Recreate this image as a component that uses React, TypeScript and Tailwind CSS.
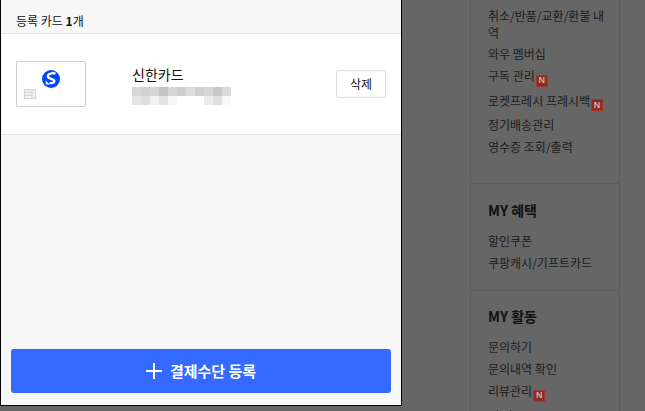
const KR = "font-['Noto_Sans_CJK_KR','Noto_Sans',sans-serif]";

function NewBadge() {
  return (
    <span className="inline-flex w-3 h-3 ml-px align-[-2px] items-center justify-center bg-[#8f2c22] border border-[#a5342a] text-[#c9b5b0] text-[9px] leading-none font-bold font-['Liberation_Sans',sans-serif]">
      N
    </span>
  );
}

function NavItem({ label, badge }: { label: string; badge?: boolean }) {
  return (
    <li className="leading-4">
      {label}
      {badge && <NewBadge />}
    </li>
  );
}

const blurCells = [
  ["#d6d6d6", "#d2d2d2", "#d6d6d6", "#c2c2c2", "#d6d6d6", "#cfcfcf", "#dddddd", "#cfcfcf", "#d6d6d6", "#c9c9c9", "#d9d9d9"],
  ["#e6e6e6", "#dfdfdf", "#f2f2f2", "#e3e3e3", "#f6f6f6", "#ffffff", "#ffffff", "#ffffff", "#ebebeb", "#dfdfdf", "#f8f8f8"],
];

function ShinhanLogo() {
  return (
    <svg width="18" height="18" viewBox="0 0 18 18">
      <circle cx="9" cy="9" r="9" fill="#0046ff" />
      <path d="M13.5 3.6C10.5 2.6 5.6 3.8 5.9 6.6C6.2 9.2 12.6 8.6 12.4 11.4C12.3 12.9 9.6 13.5 7.4 13" fill="none" stroke="#fff" strokeWidth="2.3" />
      <path d="M3.6 10.4L7.8 14.6L3.9 14.4Z" fill="#fff" />
    </svg>
  );
}

function CardChipIcon() {
  return (
    <svg width="12" height="10" viewBox="0 0 12 10" fill="none" stroke="#d4d4d4">
      <rect x="0.5" y="0.5" width="11" height="9" fill="#f0f0f0" />
      <path d="M0.5 3.5H8M0.5 6.5H8M8 0.5V9.5" />
    </svg>
  );
}

export default function App() {
  return (
    <div className={`relative w-[645px] h-[411px] overflow-hidden bg-[#666666] ${KR}`}>
      {/* Page behind the dim layer */}
      <aside className="ml-[470px] w-[150px] border-x border-[#5c5c5c] text-[12px] text-[#1c1c1c]">
        <ul className="flex flex-col gap-1.5 pl-[17px] pr-2 pt-[7px] pb-[19px] h-[183px]">
          <li className="leading-[17px] -mb-px">취소/반품/교환/환불 내역</li>
          <NavItem label="와우 멤버십" />
          <NavItem label="구독 관리" badge />
          <NavItem label="로켓프레시 프레시백" badge />
          <NavItem label="정기배송관리" />
          <NavItem label="영수증 조회/출력" />
        </ul>
        <section className="border-t border-[#5c5c5c] pl-[17px] pt-[16px] h-[107px]">
          <h3 className="text-[14px] leading-5 font-bold text-[#111111] mb-[13px]">MY 혜택</h3>
          <ul className="flex flex-col gap-1.5">
            <NavItem label="할인쿠폰" />
            <NavItem label="쿠팡캐시/기프트카드" />
          </ul>
        </section>
        <section className="border-t border-[#5c5c5c] pl-[17px] pt-[15px]">
          <h3 className="text-[14px] leading-5 font-bold text-[#111111] mb-[13px]">MY 활동</h3>
          <ul className="flex flex-col gap-1.5">
            <NavItem label="문의하기" />
            <NavItem label="문의내역 확인" />
            <NavItem label="리뷰관리" badge />
            <NavItem label="찜 리스트" />
          </ul>
        </section>
      </aside>

      {/* Payment method modal */}
      <div className="absolute left-0 top-0 w-[402px] h-[406px] flex flex-col bg-[#f7f7f7] border-x border-b border-black">
        <div className="h-[34px] pl-[15px] pt-[13px] text-[12px] leading-4 text-[#111111] border-b border-[#e2e2e2]">
          등록 카드 <b className="font-bold">1</b>개
        </div>
        <div className="h-[101px] flex items-center bg-white border-b border-[#e2e2e2] pl-[15px] pr-[15px]">
          <div className="relative w-[70px] h-[46px] bg-white border border-[#cfcfcf] rounded-[2px] flex justify-center pt-2 shrink-0">
            <div className="ml-[-1px]">
              <ShinhanLogo />
            </div>
            <div className="absolute left-[7px] bottom-[7px] flex">
              <CardChipIcon />
            </div>
          </div>
          <div className="ml-[46px] flex flex-col">
            <span className="text-[14px] leading-5 text-[#111111] mb-[3px]">신한카드</span>
            <div className="flex flex-col">
              {blurCells.map((row, r) => (
                <div key={r} className="flex">
                  {row.map((c, i) => (
                    <span key={i} className="w-[9px] h-[9px]" style={{ background: c }} />
                  ))}
                </div>
              ))}
            </div>
          </div>
          <button className="ml-auto w-[50px] h-7 bg-white border border-[#dddddd] rounded-[2px] text-[12px] text-[#111111]">
            삭제
          </button>
        </div>
        <div className="flex-1 flex items-end px-2.5 pb-3">
          <button className="w-full h-11 flex items-center justify-center gap-2 bg-[#346aff] rounded-[3px] text-white text-[15px] font-bold">
            <svg width="16" height="16" viewBox="0 0 16 16" stroke="#fff" strokeWidth="2">
              <path d="M0 8H16M8 0V16" />
            </svg>
            결제수단 등록
          </button>
        </div>
      </div>
    </div>
  );
}
